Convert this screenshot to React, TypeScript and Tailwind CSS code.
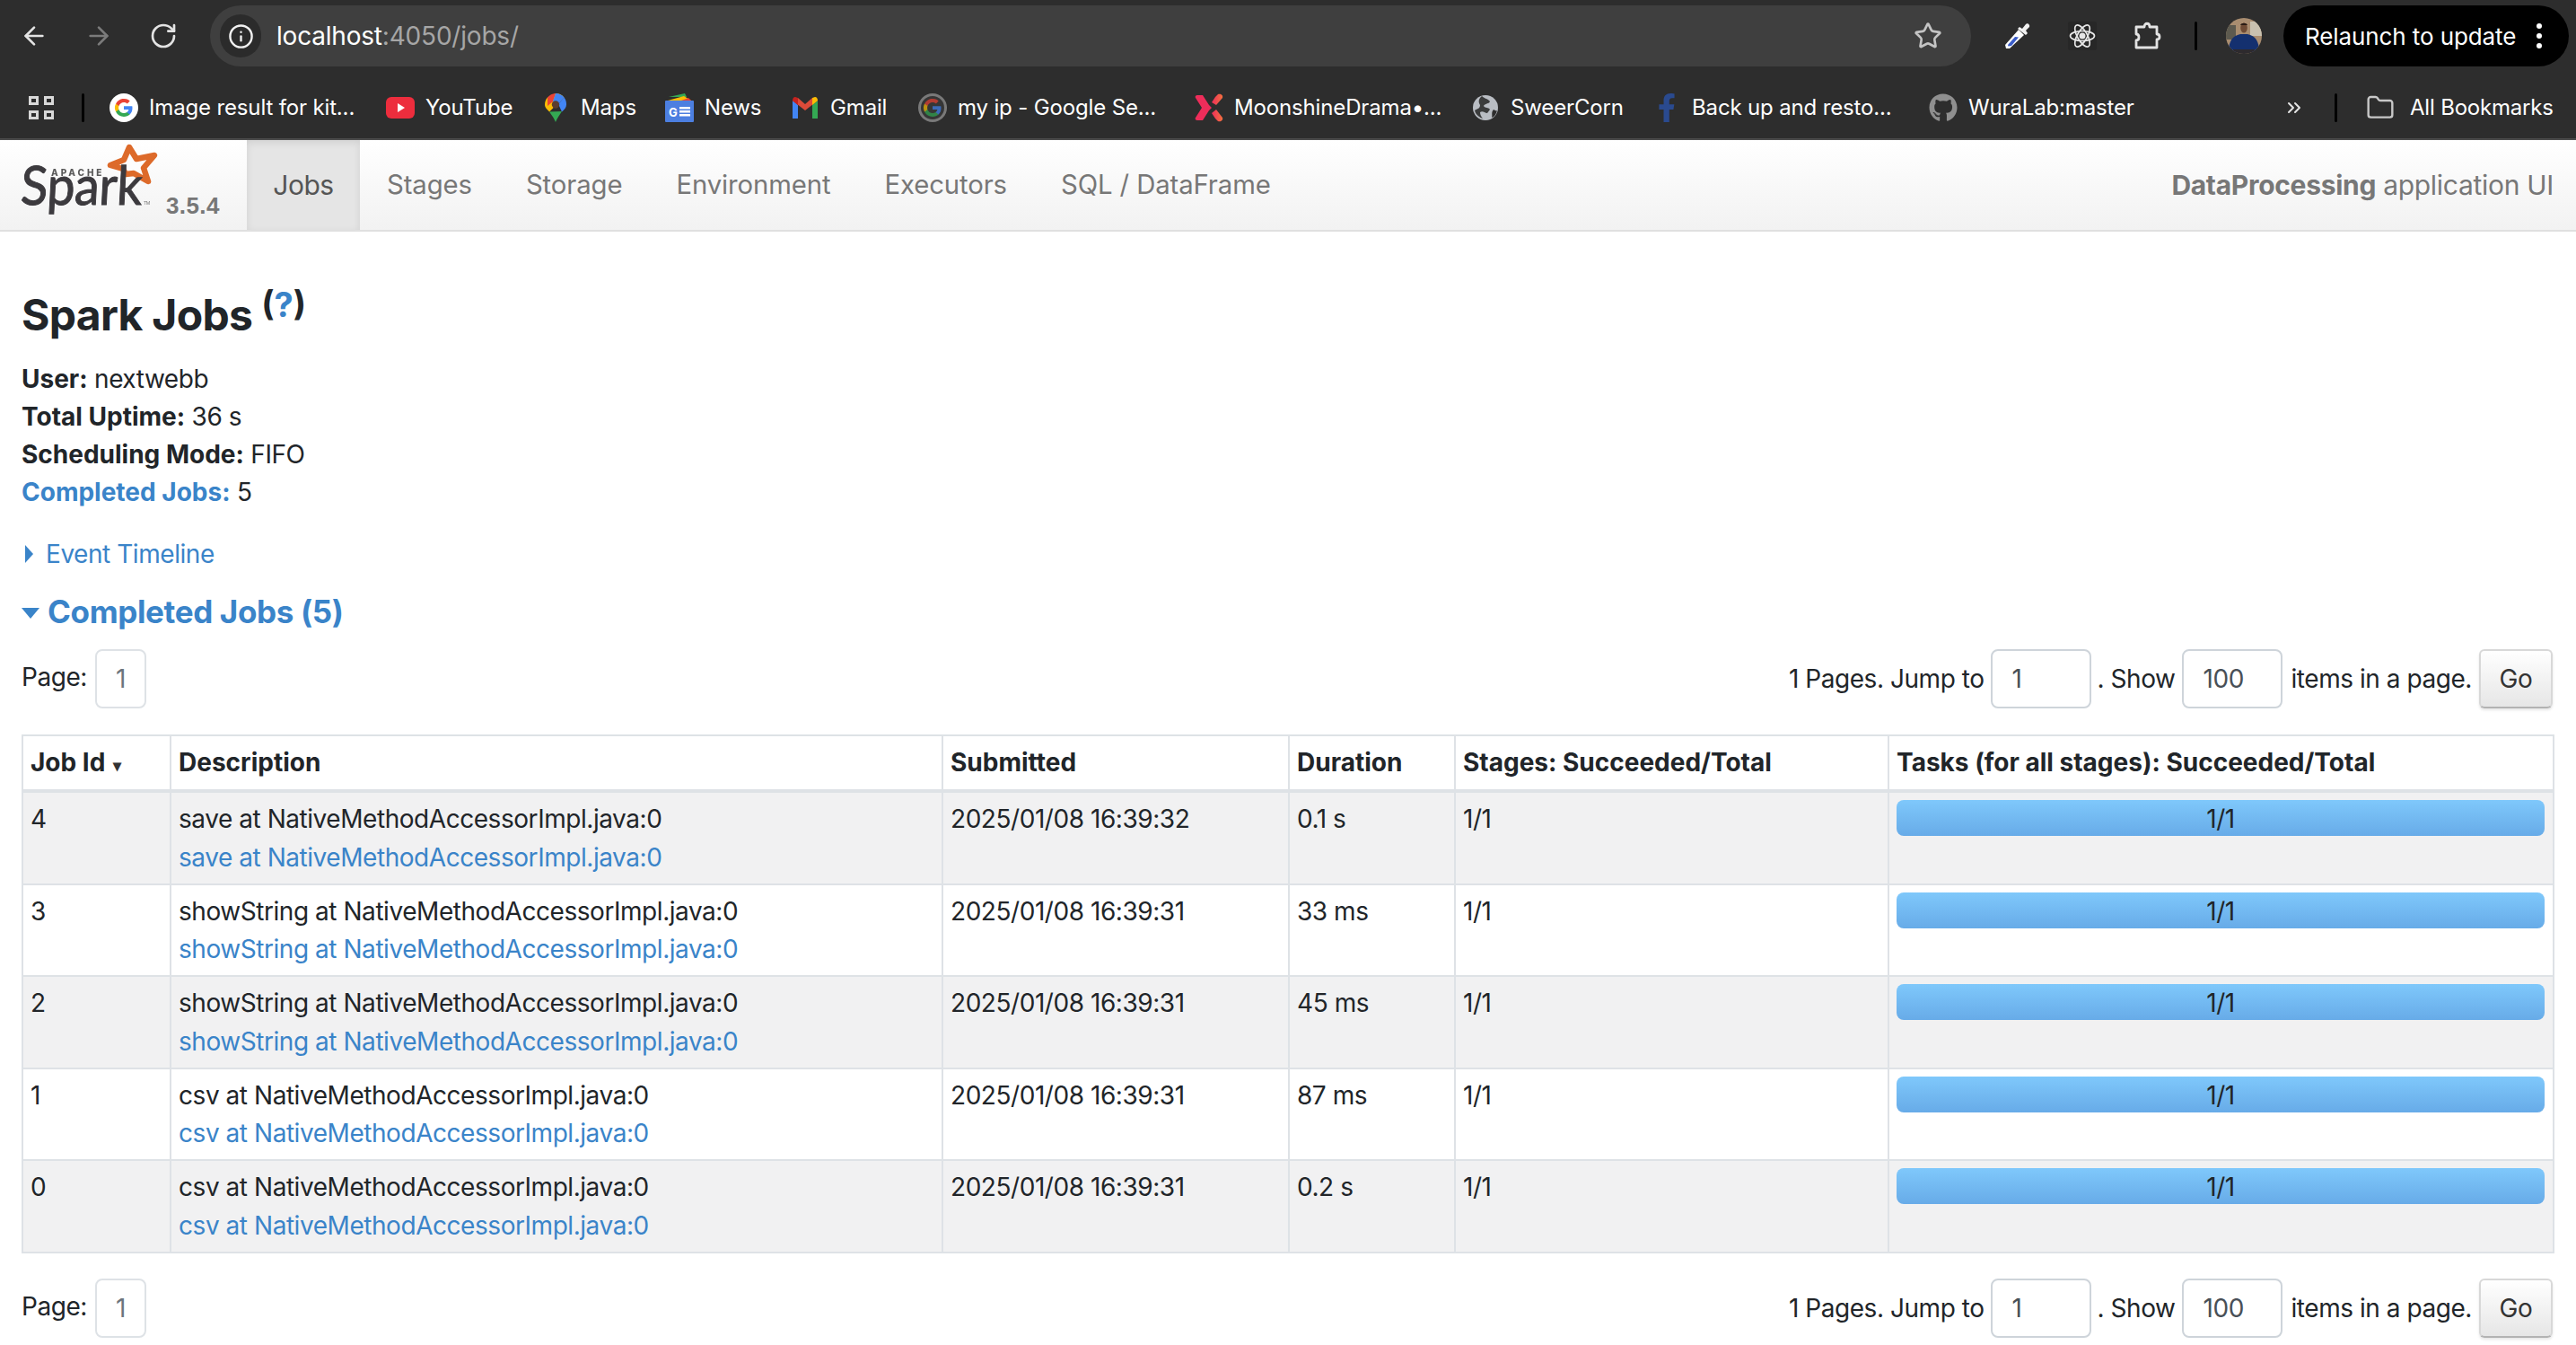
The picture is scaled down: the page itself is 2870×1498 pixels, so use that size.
import type { ReactNode } from 'react';
import { ArrowLeft, ArrowRight, ChevronsRight, Folder, Info, RotateCw, Star } from 'lucide-react';
import { FaFacebookF, FaGithub } from 'react-icons/fa';

const font = 'font-["Inter","Liberation_Sans",sans-serif]';

function GoogleIcon({ dim }: { dim?: boolean }) {
  return (
    <svg viewBox="0 0 32 32" className={dim ? 'h-8 w-8 opacity-70' : 'h-8 w-8'}>
      <circle cx="16" cy="16" r="16" fill={dim ? '#9a9a9a' : '#fff'} />
      <circle cx="16" cy="16" r="13" fill={dim ? '#3a3a3a' : '#fff'} />
      <path d="M25.5 16.3c0-.7-.1-1.4-.2-2H16v3.8h5.4a4.6 4.6 0 0 1-2 3v2.5h3.2c1.9-1.7 2.9-4.3 2.9-7.3z" fill="#4285f4" />
      <path d="M16 26c2.700 0 4.900-.9 6.600-2.400l-3.200-2.500c-.9.6-2 1-3.400 1-2.600 0-4.800-1.800-5.600-4.100H7.100v2.600A10 10 0 0 0 16 26z" fill="#34a853" />
      <path d="M10.400 18c-.2-.6-.3-1.300-.3-2s.1-1.400.3-2v-2.600H7.100a10 10 0 0 0 0 9.200z" fill="#fbbc05" />
      <path d="M16 9.900c1.500 0 2.800.5 3.800 1.500l2.900-2.900A10 10 0 0 0 7.100 11.400l3.300 2.600c.8-2.300 3-4.100 5.600-4.100z" fill="#ea4335" />
    </svg>
  );
}

function YouTubeIcon() {
  return (
    <svg viewBox="0 0 32 32" className="h-8 w-8">
      <rect x="0" y="4" width="32" height="24" rx="6" fill="#ed2d3d" />
      <path d="M13 11l8 5-8 5z" fill="#fff" />
    </svg>
  );
}

function MapsIcon() {
  return (
    <svg viewBox="0 0 32 32" className="h-8 w-8">
      <path d="M16 32c-2-5-4-7-7-11.500L23 20c-3 5-5 7-7 12z" fill="#34a853" />
      <path d="M16 0a12.500 12.500 0 0 1 9.500 4.400L9 20.500C7 18 4 16 4 12.500 4 9.500 5 6.500 7 4.500z" fill="#fbbc05" />
      <path d="M7 4.500A12.500 12.500 0 0 1 16 0l-3 9-6 5z" fill="#ea4335" />
      <path d="M16 0c4 0 7 1.500 9.500 4.500L19 12l-6-3z" fill="#4285f4" />
      <path d="M25.500 4.500c2 2.500 2.500 5 2.500 8 0 3-2 5.500-5 8L19 12z" fill="#4285f4" />
      <circle cx="16" cy="12.500" r="4.200" fill="#5c3d2e" />
    </svg>
  );
}

function NewsIcon() {
  return (
    <svg viewBox="0 0 32 32" className="h-8 w-8">
      <path d="M4 4l18-4 2 4z" fill="#34a853" />
      <path d="M3 8l18-5 8 5z" fill="#fbbc05" />
      <path d="M18 8l8-3 3 3z" fill="#ea4335" />
      <rect x="0" y="8" width="32" height="24" rx="1" fill="#4c7fe0" />
      <text x="4" y="26" fontSize="13" fontWeight="700" fill="#fff" fontFamily="Inter, sans-serif">G</text>
      <rect x="16" y="15" width="12" height="2.500" fill="#fff" />
      <rect x="16" y="19" width="12" height="2.500" fill="#fff" />
      <rect x="16" y="23" width="12" height="2.500" fill="#fff" />
    </svg>
  );
}

function GmailIcon() {
  return (
    <svg viewBox="0 0 32 32" className="h-8 w-8">
      <path d="M2 8v20h6V13z" fill="#4285f4" />
      <path d="M24 13v15h6V8z" fill="#34a853" />
      <path d="M2 8l14 11L30 8l-6-3-8 7-8-7z" fill="#dd4b39" />
      <path d="M24 5l3-1c2 0 3 2 3 4l-6 5z" fill="#fbbc05" />
      <path d="M8 5L5 4C3 4 2 6 2 8l6 5z" fill="#c5221f" />
    </svg>
  );
}

function MoonshineIcon() {
  return (
    <svg viewBox="0 0 32 32" className="h-8 w-8">
      <defs>
        <linearGradient id="moon" x1="0" y1="0" x2="1" y2="0">
          <stop offset="0" stopColor="#ee2d5a" />
          <stop offset="1" stopColor="#f4703f" />
        </linearGradient>
      </defs>
      <path d="M3 2h6l7 11 3 3-3 3-7 11H3c-2 0-3-2-2-3l7-11L1 5C0 4 1 2 3 2z" fill="#ee2d5a" />
      <path d="M26 1c3-1 6 1 5 4l-7 8-5-3 4-6zM19 22l5-4 7 9c1 3-2 5-5 4l-3-3z" fill="url(#moon)" />
    </svg>
  );
}

function GlobeIcon() {
  return (
    <svg viewBox="0 0 32 32" className="h-8 w-8">
      <circle cx="16" cy="16" r="14" fill="#b9bdc3" />
      <path d="M12 3c3 3 7 3 9 6-1 3-6 2-7 5 2 3 5 1 7 4l-3 4c-3 0-5-3-8-1 0 2 1 5 3 7-3-1-8-4-9-9 3-2 6-2 6-6-2-3-2-7 2-10z" fill="#2d2d2d" opacity="0.9" />
      <path d="M25 18c2 1 3 2 4 1-1 4-3 7-6 8 1-3-1-6 2-9z" fill="#2d2d2d" />
    </svg>
  );
}

function AtomIcon() {
  return (
    <svg viewBox="0 0 32 32" className="h-8 w-8 rounded-[3px] bg-[#272727]" fill="none" stroke="#e6e6e6" strokeWidth="1.700">
      <ellipse cx="16" cy="16" rx="13.500" ry="5.500" />
      <ellipse cx="16" cy="16" rx="13.500" ry="5.500" transform="rotate(60 16 16)" />
      <ellipse cx="16" cy="16" rx="13.500" ry="5.500" transform="rotate(120 16 16)" />
      <circle cx="16" cy="16" r="3.500" fill="#e6e6e6" stroke="none" />
    </svg>
  );
}

function DropperIcon() {
  return (
    <svg viewBox="0 0 32 32" className="h-8 w-8">
      <path d="M3 30l-1-4L17 9l6 6L7 30z" fill="#fff" />
      <path d="M5.500 27.500l-.5-1.500 8-9 4 .5-8 9.500z" fill="#3a5cc9" />
      <path d="M18 6l3 2 4-5c2-2 5 1 4 3l-4 4 2 3-2 2-9-7z" fill="#f2f2f2" />
    </svg>
  );
}

function PuzzleIcon() {
  return (
    <svg viewBox="0 0 32 32" className="h-8 w-8" fill="none" stroke="#e3e3e3" strokeWidth="2.800" strokeLinejoin="round">
      <path d="M4 6h9c0-5 6-5 6 0h8v8c4 0 4 6 0 6v9H4v-8c4 0 4-7 0-7z" />
    </svg>
  );
}

function Avatar() {
  return (
    <svg viewBox="0 0 40 40" className="h-10 w-10 rounded-full">
      <rect width="40" height="40" fill="#a98d70" />
      <rect x="0" y="8" width="11" height="16" fill="#5d5a4f" />
      <rect x="27" y="4" width="13" height="16" fill="#c9c1b0" />
      <path d="M3 38c0-12 4-18 13-20h8c9 2 13 8 13 20z" fill="#14306f" />
      <ellipse cx="20" cy="11" rx="3.800" ry="5.500" fill="#6f4b35" />
      <path d="M16 8c1-3 7-3 8 0z" fill="#2a1c15" />
      <rect x="8" y="35" width="24" height="5" fill="#2d2a2e" />
    </svg>
  );
}

function GridIcon() {
  return (
    <div className="grid h-[26px] w-[28px] grid-cols-2 gap-[6px]">
      <span className="border-[3px] border-[#d8d8d8]" />
      <span className="border-[3px] border-[#d8d8d8]" />
      <span className="border-[3px] border-[#d8d8d8]" />
      <span className="border-[3px] border-[#d8d8d8]" />
    </div>
  );
}

function SparkLogo() {
  return (
    <svg viewBox="0 0 180 100" className="h-[100px] w-[180px] blur-[0.6px]">
      <path d="M144 8L152 21 172 17 160 31 165 46 149 37 140 38 137 32 123 28 138 22Z" fill="#fdfdfd" stroke="#dd6a2a" strokeWidth="6.500" strokeLinejoin="round" />
      <text x="57" y="40" fontFamily="Inter, sans-serif" fontSize="10" fontWeight="800" fill="#5a5a5a" textLength="56">APACHE</text>
      <text x="22" y="72" fontFamily="Lato, sans-serif" fontSize="60" fontWeight="400" stroke="#3c3a3e" strokeWidth="1" fill="#3c3a3e" textLength="135" lengthAdjust="spacingAndGlyphs" transform="skewX(-3) translate(4 0)">Spark</text>
      <text x="160" y="72" fontFamily="Inter, sans-serif" fontSize="5" fill="#777">TM</text>
    </svg>
  );
}

const bookmarks: { icon: ReactNode; label: string; width: string }[] = [
  { icon: <GoogleIcon />, label: 'Image result for kit...', width: 'w-[308px]' },
  { icon: <YouTubeIcon />, label: 'YouTube', width: 'w-[173px]' },
  { icon: <MapsIcon />, label: 'Maps', width: 'w-[138px]' },
  { icon: <NewsIcon />, label: 'News', width: 'w-[140px]' },
  { icon: <GmailIcon />, label: 'Gmail', width: 'w-[142px]' },
  { icon: <GoogleIcon dim />, label: 'my ip - Google Se...', width: 'w-[308px]' },
  { icon: <MoonshineIcon />, label: 'MoonshineDrama•...', width: 'w-[308px]' },
  { icon: <GlobeIcon />, label: 'SweerCorn', width: 'w-[202px]' },
  { icon: <FaFacebookF className="mx-auto h-8 w-5 text-[#2a4a8f]" />, label: 'Back up and resto...', width: 'w-[308px]' },
  { icon: <FaGithub className="h-8 w-8 text-[#8f8f8f]" />, label: 'WuraLab:master', width: 'w-[232px]' },
];

function ChromeBar() {
  return (
    <div className="h-[156px] border-b-2 border-[#4c4c4c] bg-[#2d2d2d] text-white">
      <div className="flex h-[88px] items-start pt-[6px]">
        <div className="flex h-[68px] items-center">
          <ArrowLeft className="ml-[22px] h-8 w-8 text-[#e3e3e3]" strokeWidth={2} />
          <ArrowRight className="ml-[40px] h-8 w-8 text-[#7b7b7b]" strokeWidth={2} />
          <RotateCw className="ml-[40px] h-8 w-8 text-[#e3e3e3]" strokeWidth={2} />
        </div>
        <div className="ml-[36px] flex h-[68px] w-[1962px] items-center rounded-full bg-[#3f3f3f] pl-[11px] pr-[32px]">
          <div className="flex h-[48px] w-[46px] items-center justify-center rounded-full bg-[#2b2b2b]">
            <Info className="h-[29px] w-[29px] text-[#f0f0f0]" strokeWidth={2} />
          </div>
          <span className="ml-[17px] flex-1 text-[28px] tracking-[-0.2px] text-white">
            localhost<span className="text-[#a6a6a6]">:4050/jobs/</span>
          </span>
          <Star className="h-8 w-8 text-[#c4c4c4]" strokeWidth={2} />
        </div>
        <div className="flex h-[68px] items-center">
          <div className="ml-[36px]"><DropperIcon /></div>
          <div className="ml-[40px]"><AtomIcon /></div>
          <div className="ml-[40px]"><PuzzleIcon /></div>
          <div className="ml-[37px] h-[32px] w-[3px] rounded bg-black" />
          <div className="ml-[32px]"><Avatar /></div>
        </div>
        <div className="ml-[24px] flex h-[68px] w-[318px] items-center rounded-full bg-black pl-[24px] text-[26px] tracking-[-0.1px]">
          <span className="w-[258px]">Relaunch to update</span>
          <span className="flex flex-col gap-[5px]">
            <span className="h-[6px] w-[6px] rounded-full bg-white" />
            <span className="h-[6px] w-[6px] rounded-full bg-white" />
            <span className="h-[6px] w-[6px] rounded-full bg-white" />
          </span>
        </div>
      </div>
      <div className="flex h-[64px] items-center text-[24px]">
        <div className="ml-[32px]"><GridIcon /></div>
        <div className="ml-[31px] h-[32px] w-[3px] rounded bg-black" />
        <div className="ml-[28px] flex">
          {bookmarks.map((b) => (
            <div key={b.label} className={`flex items-center ${b.width}`}>
              <div className="w-8 shrink-0">{b.icon}</div>
              <span className="ml-[12px] whitespace-nowrap tracking-[-0.15px]">{b.label}</span>
            </div>
          ))}
        </div>
        <ChevronsRight className="ml-[163px] h-6 w-6 text-[#e3e3e3]" strokeWidth={2} />
        <div className="ml-[33px] h-[32px] w-[3px] rounded bg-black" />
        <Folder className="ml-[32px] h-8 w-8 text-[#c8c8c8]" strokeWidth={1.800} />
        <span className="ml-[17px] whitespace-nowrap tracking-[-0.2px]">All Bookmarks</span>
      </div>
    </div>
  );
}

function NavBar() {
  const links = ['Stages', 'Storage', 'Environment', 'Executors', 'SQL / DataFrame'];
  return (
    <div className="flex h-[102px] items-stretch border-b-2 border-[#e0e0e0] bg-gradient-to-b from-white to-[#f2f2f2] text-[30px] text-[#777777]">
      <div className="relative w-[275px] shrink-0">
        <SparkLogo />
        <span className="absolute left-[185px] top-[54px] font-['Liberation_Sans',sans-serif] text-[26px] font-bold tracking-[0.4px] text-[#777777]">3.5.4</span>
      </div>
      <div className="flex w-[126px] items-center justify-center bg-[#e5e5e5] text-[#555555] shadow-[inset_0_3px_8px_rgba(0,0,0,0.09)]">
        Jobs
      </div>
      <div className="flex flex-1 items-center">
        {links.map((l) => (
          <span key={l} className="whitespace-nowrap px-[30px] text-[29.3px] tracking-[-0.1px]">{l}</span>
        ))}
        <span className="ml-auto whitespace-nowrap pr-[25px] tracking-[-0.3px]">
          <strong className="font-bold">DataProcessing</strong> application UI
        </span>
      </div>
    </div>
  );
}

function Pager() {
  return (
    <div className="flex items-start justify-between">
      <div className="flex items-center">
        <span className="-mt-[4px]">Page:</span>
        <span className="ml-[9px] flex h-[66px] w-[57px] items-center justify-center rounded-[8px] border-2 border-[#dee2e6] text-[#6c757d]">1</span>
      </div>
      <div className="flex items-center whitespace-nowrap">
        <span>1 Pages. Jump to</span>
        <span className="ml-[7px] flex h-[66px] w-[112px] items-center rounded-[8px] border-2 border-[#ced4da] pl-[22px] text-[#495057]">1</span>
        <span className="ml-[7px]">. Show</span>
        <span className="ml-[7px] flex h-[66px] w-[112px] items-center rounded-[8px] border-2 border-[#ced4da] pl-[22px] text-[#495057]">100</span>
        <span className="ml-[10px]">items in a page.</span>
        <span className="ml-[8px] flex h-[66px] w-[82px] items-center justify-center rounded-[6px] border-2 border-[#d8d8d8] border-b-[#b3b3b3] bg-gradient-to-b from-white to-[#e6e6e6] text-[#333333] shadow-[0_2px_3px_rgba(0,0,0,0.1)]">Go</span>
      </div>
    </div>
  );
}

const jobs = [
  { id: 4, desc: 'save at NativeMethodAccessorImpl.java:0', time: '2025/01/08 16:39:32', dur: '0.1 s' },
  { id: 3, desc: 'showString at NativeMethodAccessorImpl.java:0', time: '2025/01/08 16:39:31', dur: '33 ms' },
  { id: 2, desc: 'showString at NativeMethodAccessorImpl.java:0', time: '2025/01/08 16:39:31', dur: '45 ms' },
  { id: 1, desc: 'csv at NativeMethodAccessorImpl.java:0', time: '2025/01/08 16:39:31', dur: '87 ms' },
  { id: 0, desc: 'csv at NativeMethodAccessorImpl.java:0', time: '2025/01/08 16:39:31', dur: '0.2 s' },
];

function JobsTable() {
  const th = 'border-2 border-b-4 border-[#dee2e6] px-[8px] pt-[8px] pb-[5px] text-left align-top font-bold tracking-[0px]';
  const td = 'border-2 border-[#dee2e6] px-[8px] py-[8px] align-top';
  return (
    <table className="w-[2820px] table-fixed border-collapse leading-[42.25px]">
      <colgroup>
        <col className="w-[165px]" />
        <col className="w-[860px]" />
        <col className="w-[386px]" />
        <col className="w-[185px]" />
        <col className="w-[483px]" />
        <col className="w-[741px]" />
      </colgroup>
      <thead>
        <tr>
          <th className={th}>
            Job Id <span className="ml-[2px] text-[18px] text-[#333333]">▾</span>
          </th>
          <th className={th}>Description</th>
          <th className={th}>Submitted</th>
          <th className={th}>Duration</th>
          <th className={th}>Stages: Succeeded/Total</th>
          <th className={th}>Tasks (for all stages): Succeeded/Total</th>
        </tr>
      </thead>
      <tbody>
        {jobs.map((job, i) => (
          <tr key={job.id} className={i % 2 === 0 ? 'bg-[#f1f1f2]' : ''}>
            <td className={td}>{job.id}</td>
            <td className={td}>
              <div>{job.desc}</div>
              <div className="text-[#3a84c9]">{job.desc}</div>
            </td>
            <td className={td}>{job.time}</td>
            <td className={td}>{job.dur}</td>
            <td className={td}>1/1</td>
            <td className={td}>
              <div className="mr-[1px] flex h-[40px] items-center justify-center rounded-[8px] bg-gradient-to-b from-[#7fc8fb] to-[#67abe8] pt-[2px] leading-none">
                1/1
              </div>
            </td>
          </tr>
        ))}
      </tbody>
    </table>
  );
}

export default function App() {
  return (
    <div className={`h-[1498px] w-[2870px] overflow-hidden bg-white text-[28px] text-[#212529] ${font} tracking-[-0.45px]`}>
      <ChromeBar />
      <NavBar />
      <div className="w-[2844px] pl-[24px]">
        <h3 className="mt-[63px] text-[48px] font-bold leading-[59px] tracking-[-0.7px]">
          Spark Jobs
          <sup className="relative -top-[15px] ml-[10px] align-baseline text-[38px] tracking-normal">
            (<span className="text-[#3a84c9]">?</span>)
          </sup>
        </h3>
        <ul className="mt-[21px] leading-[42px]">
          <li><strong className="font-bold tracking-[0px]">User:</strong> nextwebb</li>
          <li><strong className="font-bold tracking-[0px]">Total Uptime:</strong> 36 s</li>
          <li><strong className="font-bold tracking-[0px]">Scheduling Mode:</strong> FIFO</li>
          <li><strong className="font-bold tracking-[0px] text-[#3a84c9]">Completed Jobs:</strong> 5</li>
        </ul>
        <div className="mt-[27px] flex items-center text-[#3a84c9]">
          <span className="ml-[4px] h-0 w-0 border-y-[10px] border-l-[9px] border-y-transparent border-l-[#3a84c9]" />
          <span className="ml-[14px] leading-[42px]">Event Timeline</span>
        </div>
        <div className="mt-[18px] flex items-center text-[#3a84c9]">
          <span className="mt-[4px] h-0 w-0 border-x-[10px] border-t-[12px] border-x-transparent border-t-[#3a84c9]" />
          <span className="ml-[9px] text-[35px] font-bold leading-[50px] tracking-[-0.35px]">Completed Jobs (5)</span>
        </div>
        <div className="mt-[17px]"><Pager /></div>
        <div className="mt-[29px]"><JobsTable /></div>
        <div className="mt-[28px]"><Pager /></div>
      </div>
    </div>
  );
}
